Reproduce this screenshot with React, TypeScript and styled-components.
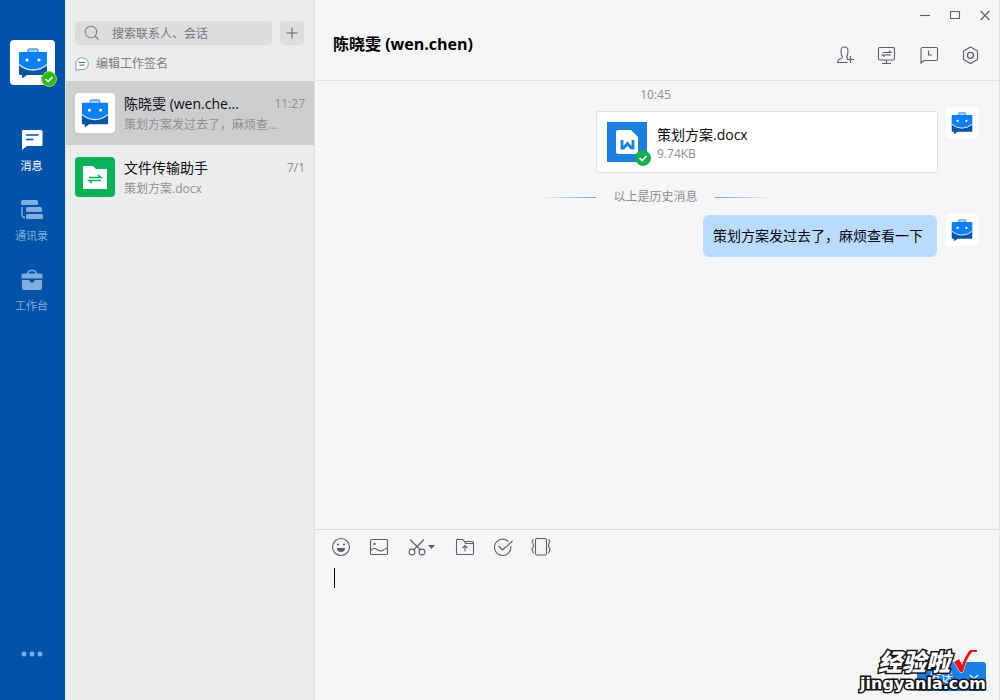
import React from "react";
import styled, { createGlobalStyle } from "styled-components";

const Global = createGlobalStyle`
  *, *::before, *::after { box-sizing: border-box; }
  body { margin: 0; background: #f5f6f8; }
  body, button, input, textarea {
    font-family: "Open Sans", "Noto Sans CJK SC", sans-serif;
  }
  button { border: 0; padding: 0; background: none; color: inherit; cursor: pointer; }
  h1, h2, p, ul { margin: 0; padding: 0; font-weight: 400; }
  ul { list-style: none; }
  svg { display: block; flex: none; }
`;

const Shell = styled.div`
  display: flex;
  min-height: 100vh;
  position: relative;
`;

/* ---------- left rail ---------- */

const Rail = styled.nav`
  flex: 0 0 65px;
  display: flex;
  flex-direction: column;
  align-items: center;
  padding: 40px 0 36px;
  background: #0053a8;
`;

const AvatarBox = styled.span<{ $size: number; $bg?: string }>`
  flex: none;
  position: relative;
  display: flex;
  align-items: center;
  justify-content: center;
  width: ${(p) => p.$size}px;
  height: ${(p) => p.$size}px;
  border-radius: 4px;
  background: ${(p) => p.$bg ?? "#fff"};
`;

const Badge = styled.span<{ $offset: number }>`
  position: absolute;
  right: -${(p) => p.$offset}px;
  bottom: -${(p) => p.$offset}px;
`;

const NavList = styled.div`
  display: flex;
  flex-direction: column;
  align-self: stretch;
  gap: 22px;
  margin-top: 43px;
`;

const NavButton = styled.button<{ $active?: boolean }>`
  display: flex;
  flex-direction: column;
  align-items: center;
  gap: 5px;
  height: 48px;
  padding-right: 2px;
  font-size: 11px;
  line-height: 18px;
  color: ${(p) => (p.$active ? "#fff" : "#80aede")};
`;

const MoreButton = styled.button`
  margin-top: auto;
  padding-right: 2px;
  color: #73b0f0;
`;

/* ---------- conversation list ---------- */

const Panel = styled.aside`
  flex: 0 0 250px;
  min-width: 0;
  background: #ebeced;
  border-left: 1px solid #d9ebf7;
  border-right: 1px solid #dfe0e2;
`;

const PanelTop = styled.div`
  height: 81px;
  padding: 21px 10px 0 9px;
`;

const SearchRow = styled.div`
  display: flex;
  gap: 8px;
`;

const SearchField = styled.label`
  flex: 1;
  min-width: 0;
  display: flex;
  align-items: center;
  gap: 12px;
  height: 24px;
  padding: 0 9px;
  border-radius: 4px;
  background: #dcddde;
  color: #7c7f82;
`;

const SearchInput = styled.input`
  flex: 1;
  min-width: 0;
  border: 0;
  padding: 0;
  outline: 0;
  background: none;
  font-size: 12px;
  &::placeholder { color: #75777a; opacity: 1; }
`;

const AddButton = styled.button`
  display: flex;
  align-items: center;
  justify-content: center;
  width: 24px;
  height: 24px;
  border-radius: 4px;
  background: #dcddde;
  color: #66696c;
`;

const SignatureButton = styled.button`
  display: flex;
  align-items: center;
  gap: 7px;
  margin-top: 10px;
  font-size: 12px;
  line-height: 18px;
  color: #7a7d80;
`;

const Conversation = styled.button<{ $selected?: boolean }>`
  display: flex;
  align-items: center;
  gap: 9px;
  width: 100%;
  height: 64px;
  padding: 0 9px;
  text-align: left;
  background: ${(p) => (p.$selected ? "#cdced0" : "transparent")};
`;

const ConversationText = styled.span`
  flex: 1;
  min-width: 0;
  display: flex;
  flex-direction: column;
  padding-top: 2px;
`;

const ConversationHead = styled.span`
  display: flex;
  justify-content: space-between;
  align-items: center;
  line-height: 22px;
`;

const Name = styled.span`
  font-size: 14px;
  color: #0c0c0c;
  white-space: nowrap;
`;

const When = styled.time`
  font-size: 12px;
  color: #8d8f91;
`;

const Preview = styled.span`
  font-size: 12px;
  line-height: 20px;
  color: #8d8f91;
  white-space: nowrap;
`;

/* ---------- chat ---------- */

const Chat = styled.main`
  flex: 1;
  min-width: 0;
  display: flex;
  flex-direction: column;
  background: #f5f6f8;
  border-right: 1px solid #e3e4e6;
`;

const Header = styled.header`
  display: flex;
  justify-content: space-between;
  height: 81px;
  padding-left: 18px;
  border-bottom: 1px solid #e1e2e4;
`;

const Title = styled.h1`
  margin-top: 32px;
  font-size: 16px;
  line-height: 24px;
  font-weight: 700;
  color: #000;
  white-space: nowrap;
`;

const HeaderSide = styled.div`
  display: flex;
  flex-direction: column;
  align-items: flex-end;
  color: #5c5f63;
`;

const WindowControls = styled.div`
  display: flex;
  gap: 18px;
  padding: 9px 8px 0 0;
`;

const HeaderTools = styled.div`
  display: flex;
  gap: 22px;
  padding: 24px 18px 0 0;
`;

const Messages = styled.section`
  flex: 1;
  display: flex;
  flex-direction: column;
  padding: 4px 21px 0 18px;
`;

const TimeStamp = styled.time`
  align-self: center;
  font-size: 12px;
  line-height: 20px;
  color: #8a8d90;
`;

const MessageItem = styled.div<{ $top: number; $gap: number }>`
  display: flex;
  justify-content: flex-end;
  align-items: flex-start;
  gap: ${(p) => p.$gap}px;
  margin-top: ${(p) => p.$top}px;
`;

const FileCard = styled.div`
  display: flex;
  gap: 10px;
  width: 342px;
  height: 62px;
  margin-top: 4px;
  padding: 10px;
  background: #fff;
  border: 1px solid #dfe1e4;
  border-radius: 2px;
`;

const FileIcon = styled.span`
  position: relative;
  width: 40px;
  height: 40px;
  background: #1b7fe0;
`;

const FileText = styled.div`
  display: flex;
  flex-direction: column;
  padding-top: 2px;
`;

const FileName = styled.a`
  font-size: 14px;
  line-height: 21px;
  color: #0c0c0c;
  text-decoration: none;
`;

const FileSize = styled.span`
  font-size: 12px;
  line-height: 18px;
  color: #8a8d90;
`;

const HistoryDivider = styled.div`
  display: flex;
  align-items: center;
  justify-content: center;
  gap: 17px;
  margin-top: 14px;
  font-size: 12px;
  line-height: 20px;
  color: #8a8d90;
`;

const Fade = styled.span<{ $to: "left" | "right" }>`
  width: 58px;
  height: 1px;
  background: linear-gradient(to ${(p) => p.$to}, #8d9bb0, #d5d9df 65%, transparent);
`;

const Bubble = styled.p`
  margin-top: 1px;
  padding: 10px 14px 10px 10px;
  border-radius: 6px;
  background: #b9dbfd;
  font-size: 14px;
  line-height: 22px;
  color: #05080c;
  white-space: nowrap;
`;

/* ---------- composer ---------- */

const Composer = styled.form`
  display: flex;
  flex-direction: column;
  height: 171px;
  padding: 7px 13px 9px 16px;
  border-top: 1px solid #dcdde0;
`;

const Tools = styled.div`
  display: flex;
  gap: 18px;
  color: #5c5f63;
`;

const Draft = styled.div`
  flex: 1;
  display: flex;
  padding: 11px 0 0 3px;
`;

const Caret = styled.span`
  width: 1px;
  height: 20px;
  background: #000;
`;

const DraftInput = styled.textarea`
  flex: 1;
  border: 0;
  padding: 0;
  outline: 0;
  resize: none;
  background: none;
  font-size: 14px;
  line-height: 20px;
`;

const SendButton = styled.button`
  align-self: flex-end;
  display: flex;
  align-items: center;
  justify-content: flex-end;
  gap: 15px;
  width: 69px;
  height: 29px;
  padding-right: 6px;
  border-radius: 3px;
  background: #1b7fe6;
  color: #fff;
  font-size: 12px;
`;

/* ---------- site mark over the corner ---------- */

const Mark = styled.div`
  position: absolute;
  right: 14px;
  bottom: 6px;
  display: flex;
  flex-direction: column;
  color: #fff;
  -webkit-text-stroke: 3px #111;
  paint-order: stroke fill;
  pointer-events: none;
`;

const MarkTop = styled.div`
  display: flex;
  align-items: center;
  justify-content: flex-end;
  gap: 3px;
  padding-right: 9px;
  font: italic 900 24px/26px "Noto Sans CJK SC", sans-serif;
`;

const MarkSite = styled.div`
  font: 700 16px/20px "DejaVu Sans", sans-serif;
`;

/* ---------- drawings ---------- */

const Briefcase = ({ size }: { size: number }) => (
  <svg width={size} height={size} viewBox="0 0 30 30" aria-hidden="true">
    <path d="M1 15h28v11q0 1-1 1H9l-5 3.500v-3.500H2q-1 0-1-1z" fill="#0654a6" />
    <path d="M10 4V2.500Q10 1 11.500 1h7Q20 1 20 2.500V4" fill="#a9d0fb" stroke="#4b9df5" strokeWidth="1.500" />
    <path d="M2 4h26q1 0 1 1v11q0 1-1 2-6 4-13 4T2 18q-1-1-1-2V5q0-1 1-1z" fill="#0e80f6" />
    <path d="M1 16.500q6 5.500 14 5.500t14-5.500" fill="none" stroke="#dcebfc" strokeWidth="1.300" />
    <circle cx="9" cy="12" r="1.600" fill="#fff" />
    <circle cx="21" cy="12" r="1.600" fill="#fff" />
  </svg>
);

const CheckBadge = ({ fill, ring }: { fill: string; ring: string }) => (
  <svg width="16" height="16" viewBox="0 0 16 16" aria-hidden="true">
    <circle cx="8" cy="8" r="7.500" fill={fill} stroke={ring} />
    <path d="M4.500 8l2.600 2.500L11.500 6" fill="none" stroke="#fff" strokeWidth="1.700" />
  </svg>
);

const Line = ({ children, w = 20, h = 20 }: { children: React.ReactNode; w?: number; h?: number }) => (
  <svg width={w} height={h} viewBox={`0 0 ${w} ${h}`} fill="none" stroke="currentColor" strokeWidth="1.100" aria-hidden="true">
    {children}
  </svg>
);

const MessageGlyph = () => (
  <svg width="22" height="24" viewBox="0 0 22 24" fill="currentColor" aria-hidden="true">
    <path d="M2 2h18q1.500 0 1.500 1.500v13q0 1.500-1.500 1.500H6l-5 4V3.500Q1 2 2 2z" />
    <path d="M5 7h12.500M5 11.500h7.500" stroke="#0053a8" strokeWidth="1.700" />
  </svg>
);

const ContactsGlyph = () => (
  <svg width="24" height="24" viewBox="0 0 24 24" fill="currentColor" aria-hidden="true">
    <rect x="1" y="2" width="17" height="5" rx="1.500" />
    <rect x="6" y="9" width="16" height="5" rx="1.500" />
    <rect x="6" y="16" width="17" height="5" rx="1.500" />
    <path d="M2 9v8q0 2.500 3 2.500" fill="none" stroke="currentColor" strokeWidth="1.500" />
  </svg>
);

const WorkbenchGlyph = () => (
  <svg width="22" height="24" viewBox="0 0 22 24" fill="currentColor" aria-hidden="true">
    <path d="M6.500 6l1-2q.500-1.500 2-1.500h3q1.500 0 2 1.500l1 2" fill="none" stroke="currentColor" strokeWidth="1.700" />
    <path d="M2.500 5.500h17Q21.500 5.500 21.500 7v3.500H.5V7q0-1.500 2-1.500z" />
    <path d="M1 12h7.500v1q0 1.500 1.500 1.500h2q1.500 0 1.500-1.500v-1H21v8q0 2-2 2H3q-2 0-2-2z" />
  </svg>
);

const DotsGlyph = () => (
  <svg width="24" height="20" viewBox="0 0 24 20" fill="currentColor" aria-hidden="true">
    <circle cx="4" cy="10" r="2.500" />
    <circle cx="12" cy="10" r="2.500" />
    <circle cx="20" cy="10" r="2.500" />
  </svg>
);

const FolderGlyph = () => (
  <svg width="40" height="40" viewBox="0 0 40 40" aria-hidden="true">
    <path d="M8 9h10l3 3h11v20H8z" fill="#fff" />
    <path d="M14 20.500h12l-3-2.500M26 23.500H14l3 2.500" fill="none" stroke="#06b457" strokeWidth="1.500" />
  </svg>
);

const WordGlyph = () => (
  <svg width="40" height="40" viewBox="0 0 40 40" aria-hidden="true">
    <path d="M11 8h13l7 7v15q0 2-2 2H11q-2 0-2-2V10q0-2 2-2z" fill="#fff" />
    <path d="M15 18v8.200h1.500l4-4.700 4 4.700H26V18" fill="none" stroke="#1b7fe0" strokeWidth="2.800" />
  </svg>
);

export default function App() {
  return (
    <>
      <Global />
      <Shell>
        <Rail>
          <AvatarBox $size={45}>
            <Briefcase size={30} />
            <Badge $offset={2}>
              <CheckBadge fill="#2dbb13" ring="#86d67a" />
            </Badge>
          </AvatarBox>
          <NavList>
            <NavButton $active>
              <MessageGlyph />
              消息
            </NavButton>
            <NavButton>
              <ContactsGlyph />
              通讯录
            </NavButton>
            <NavButton>
              <WorkbenchGlyph />
              工作台
            </NavButton>
          </NavList>
          <MoreButton aria-label="更多">
            <DotsGlyph />
          </MoreButton>
        </Rail>

        <Panel>
          <PanelTop>
            <SearchRow>
              <SearchField>
                <Line w={16} h={16}>
                  <circle cx="7" cy="7" r="5.700" />
                  <path d="M11 11l3.500 3.500" />
                </Line>
                <SearchInput aria-label="搜索" placeholder="搜索联系人、会话" />
              </SearchField>
              <AddButton aria-label="添加">
                <Line w={12} h={12}>
                  <path d="M6 .5v11M.5 6h11" />
                </Line>
              </AddButton>
            </SearchRow>
            <SignatureButton>
              <svg width="14" height="14" viewBox="0 0 14 14" fill="#fff" stroke="#8b99a6" aria-hidden="true">
                <path d="M1 13.500V7Q1 .8 7 .8t6.300 5.800Q13.300 12.500 7 12.500H4z" />
                <path d="M3.500 5.500h7M4.500 8h5" stroke="#267fae" strokeWidth="1.200" />
              </svg>
              编辑工作签名
            </SignatureButton>
          </PanelTop>
          <ul>
            <li>
              <Conversation $selected>
                <AvatarBox $size={40}>
                  <Briefcase size={28} />
                </AvatarBox>
                <ConversationText>
                  <ConversationHead>
                    <Name>陈晓雯 (wen.che...</Name>
                    <When>11:27</When>
                  </ConversationHead>
                  <Preview>策划方案发过去了，麻烦查...</Preview>
                </ConversationText>
              </Conversation>
            </li>
            <li>
              <Conversation>
                <AvatarBox $size={40} $bg="#06b457">
                  <FolderGlyph />
                </AvatarBox>
                <ConversationText>
                  <ConversationHead>
                    <Name>文件传输助手</Name>
                    <When>7/1</When>
                  </ConversationHead>
                  <Preview>策划方案.docx</Preview>
                </ConversationText>
              </Conversation>
            </li>
          </ul>
        </Panel>

        <Chat>
          <Header>
            <Title>陈晓雯 (wen.chen)</Title>
            <HeaderSide>
              <WindowControls>
                <button aria-label="最小化">
                  <Line w={12} h={12}><path d="M1 6.500h10" /></Line>
                </button>
                <button aria-label="最大化">
                  <Line w={12} h={12}><path d="M1.500 2.500h9v7h-9z" /></Line>
                </button>
                <button aria-label="关闭">
                  <Line w={12} h={12}><path d="M1.500 2l9 9M10.500 2l-9 9" /></Line>
                </button>
              </WindowControls>
              <HeaderTools>
                <button aria-label="添加成员">
                  <Line>
                    <path d="M12.500 17.500h-10q0-2.500 2.500-3.500 2.500-1 2.500-2Q6 10 6 6q0-4 3.500-4T13 6q0 4-1.500 6l1.500 1.500M12 14.500h7M15.500 11v7" />
                  </Line>
                </button>
                <button aria-label="共享屏幕">
                  <Line>
                    <rect x="1.500" y="2.500" width="16" height="12.500" rx="1.500" />
                    <path d="M9.500 15v3M5 18.500h9M5.500 7.500h8.500l-2-1.500M14 10H5.500l2 1.500" />
                  </Line>
                </button>
                <button aria-label="聊天记录">
                  <Line>
                    <path d="M3 2.500h14q1.500 0 1.500 1.500v10q0 1.500-1.500 1.500H5l-3 2.500V4q0-1.500 1.500-1.500zM9.500 5.500V10H13" />
                  </Line>
                </button>
                <button aria-label="设置">
                  <Line>
                    <path d="M9.500 2l7 4v8.500l-7 4-7-4V6z" strokeLinejoin="round" />
                    <circle cx="9.500" cy="10.300" r="3" strokeWidth="1.300" />
                  </Line>
                </button>
              </HeaderTools>
            </HeaderSide>
          </Header>

          <Messages>
            <TimeStamp>10:45</TimeStamp>
            <MessageItem $top={2} $gap={8}>
              <FileCard>
                <FileIcon>
                  <WordGlyph />
                  <Badge $offset={4}>
                    <CheckBadge fill="#12b04f" ring="#12b04f" />
                  </Badge>
                </FileIcon>
                <FileText>
                  <FileName href="#">策划方案.docx</FileName>
                  <FileSize>9.74KB</FileSize>
                </FileText>
              </FileCard>
              <AvatarBox $size={32}>
                <Briefcase size={22} />
              </AvatarBox>
            </MessageItem>
            <HistoryDivider>
              <Fade $to="left" />
              以上是历史消息
              <Fade $to="right" />
            </HistoryDivider>
            <MessageItem $top={7} $gap={9}>
              <Bubble>策划方案发过去了，麻烦查看一下</Bubble>
              <AvatarBox $size={32}>
                <Briefcase size={22} />
              </AvatarBox>
            </MessageItem>
          </Messages>

          <Composer onSubmit={(e) => e.preventDefault()}>
            <Tools>
              <button type="button" aria-label="表情">
                <Line>
                  <circle cx="10" cy="10" r="8.500" />
                  <path d="M6 11h8q0 4-4 4t-4-4z" fill="currentColor" stroke="none" />
                  <path d="M6 7.500h2M12 7.500h2" strokeWidth="1.600" />
                </Line>
              </button>
              <button type="button" aria-label="图片">
                <Line>
                  <rect x="1.500" y="2.500" width="17" height="15" rx="1" />
                  <path d="M1.500 14q3-4 6.500-1.500t5.500 1T18.500 11" />
                  <path d="M4.500 7h2" strokeWidth="2" />
                </Line>
              </button>
              <button type="button" aria-label="截图">
                <Line w={30}>
                  <path d="M3 2.500l10.500 10.500M17 2.500L6.500 13" />
                  <circle cx="5" cy="15" r="2.900" />
                  <circle cx="15" cy="15" r="2.900" />
                  <path d="M21 8h7l-3.500 4z" fill="currentColor" stroke="none" />
                </Line>
              </button>
              <button type="button" aria-label="文件">
                <Line>
                  <path d="M1.500 17V3q0-.500 1-.500h5l2 2h8q1 0 1 1V17q0 .500-1 .500h-15q-1 0-1-.500zM9.500 4.500l1 2h8M10 14.500V9M7.500 11L10 8.500l2.500 2.500" />
                </Line>
              </button>
              <button type="button" aria-label="待办">
                <Line>
                  <path d="M15.500 4.500A8.200 8.200 0 1 0 17.800 9M5.500 9l4 4L19.500 4" />
                </Line>
              </button>
              <button type="button" aria-label="抖动">
                <Line>
                  <rect x="4.500" y="1.500" width="11" height="16.500" rx="1.500" />
                  <path d="M2.500 2.500q-2 1.500-1 3t1 3-1 2.500 0 3 1 2.500M17.500 2.500q2 1.500 1 3t-1 3 1 2.500 0 3-1 2.500" />
                </Line>
              </button>
            </Tools>
            <Draft>
              <Caret />
              <DraftInput aria-label="输入消息" />
            </Draft>
            <SendButton type="submit">
              发送
              <Line w={12} h={12}><path d="M2 4l4 4 4-4" /></Line>
            </SendButton>
          </Composer>
        </Chat>

        <Mark>
          <MarkTop>
            经验啦
            <svg width="24" height="24" viewBox="0 0 24 24" aria-hidden="true">
              <path d="M1 13l5-3 3 6Q13 5 17 1h7v2h-5Q13 10 10 23H7z" fill="#f01010" stroke="#fff" strokeWidth="1" paintOrder="stroke" />
            </svg>
          </MarkTop>
          <MarkSite>jingyanla.com</MarkSite>
        </Mark>
      </Shell>
    </>
  );
}
